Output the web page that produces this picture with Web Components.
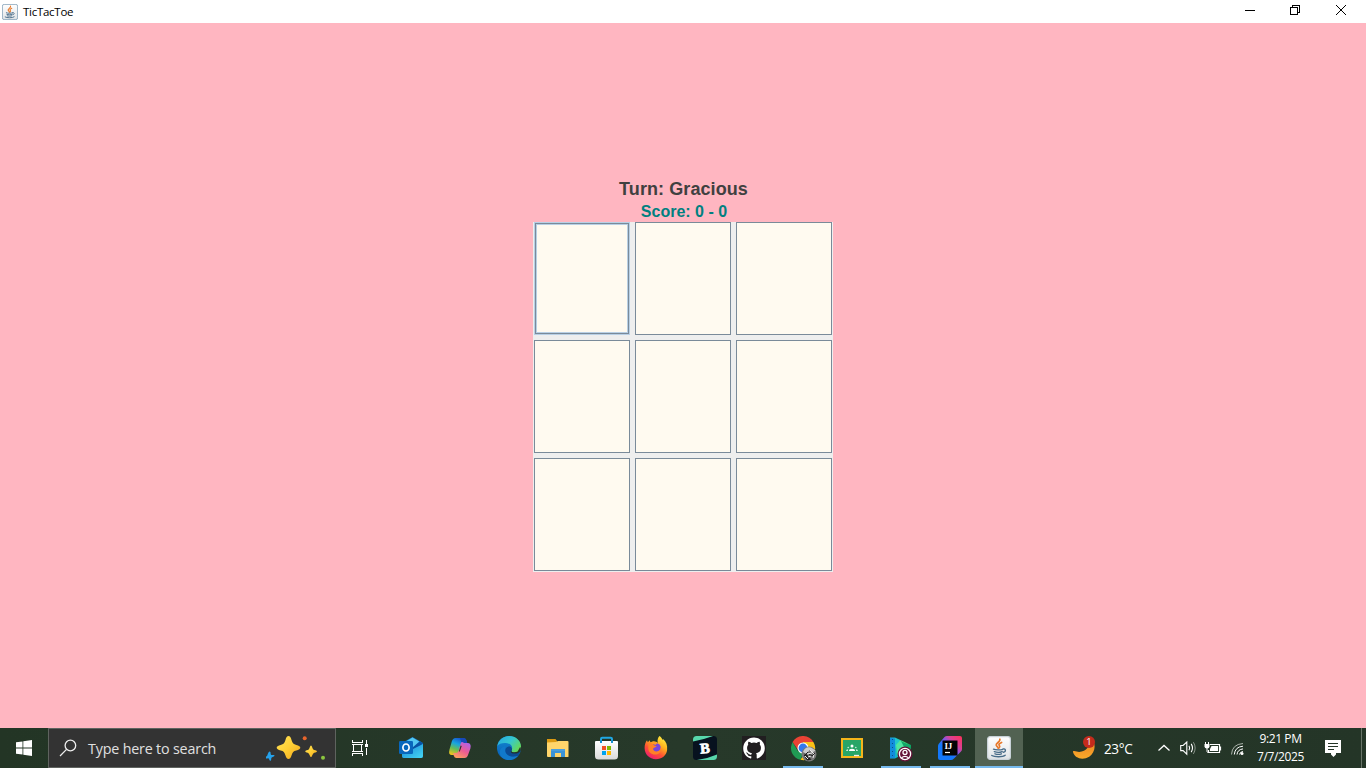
<!DOCTYPE html>
<html lang="en"><head><meta charset="utf-8"><title>TicTacToe</title>
<style>html,body{margin:0;height:100%;overflow:hidden}body{font-family:"Open Sans","Noto Sans",sans-serif}</style></head>
<body><desk-top></desk-top>
<script>
const define=(name,html)=>{
  const t=document.createElement('template');t.innerHTML=html;
  customElements.define(name,class extends HTMLElement{
    constructor(){super();this.attachShadow({mode:'open'}).append(t.content.cloneNode(true));}
  });
};

define('java-cup',`<style>:host{display:block;width:24px;height:24px}svg{display:block;width:100%;height:100%}</style>
<svg viewBox="0 0 24 24"><defs><linearGradient id="g" x2="0" y2="1"><stop stop-color="#fff"/><stop offset="1" stop-color="#dfe3e6"/></linearGradient></defs>
<rect x=".6" y=".6" width="22.8" height="22.8" rx="2.6" fill="url(#g)" stroke="var(--edge,#c9d2d8)" stroke-width="1.2"/>
<g fill="none" stroke="#e8792a" stroke-width="1.7" stroke-linecap="round"><path d="M12.8 3.2c1 2.4-3.8 3.8-3.6 5.8.1 1.4 2 1.9 2 3.2"/><path d="M14.6 6.4c-2.600 1.200-3.200 2-2.200 3.200.7.9.3 1.700-.4 2.400"/></g>
<g fill="none" stroke="#486c88" stroke-width="1.400" stroke-linecap="round"><path d="M6.500 13.200c2 .9 7 .9 9.300.1M7.300 15.600c2.200.8 6 .8 7.800 0M8 17.800c1.800.6 4.800.6 6.400 0M16 13c3-.9 3.300 2.700.3 3.200M4.800 19.500c2.500 1.600 11 1.700 13.400-.2"/></g></svg>`);

define('title-bar',`<style>
:host{display:flex;height:23px;background:#fff;color:#000;align-items:center}
java-cup{width:16px;height:16px;margin-left:2px;--edge:#7d9db5}
span{font-size:11.500px;letter-spacing:-.27px;margin-left:5px;flex:1;line-height:23px}
svg{display:block}
</style><java-cup></java-cup><span><slot></slot></span>
<svg width="138" height="23" fill="none" stroke="#000" shape-rendering="crispEdges"><path d="M17 10.500h10"/><path d="M62.500 7.500h7v7h-7zM64.500 7V5.500h7v7H70"/><path d="M108 5l10 10M118 5l-10 10" shape-rendering="auto" stroke-width="1"/></svg>`);

define('game-cell',`<style>:host{display:block;box-sizing:border-box;background:#fffaf0;border:1px solid #7a8a99}
:host([focused]){border-color:#b8cfe5;box-shadow:inset 0 0 0 1px #7a8a99,inset 0 0 0 2px #b8cfe5}</style><slot></slot>`);

define('game-board',`<style>
:host{display:grid;box-sizing:border-box;width:300px;height:350px;background:#eee;padding:0 1px 1px;grid-template-columns:repeat(3,96px);grid-template-rows:repeat(3,113px);gap:5px}
</style><game-cell focused></game-cell>${'<game-cell></game-cell>'.repeat(8)}`);

define('game-panel',`<style>
:host{display:flex;flex-direction:column;align-items:center;background:#ffb6c1;font-family:"Liberation Sans",sans-serif;font-weight:bold;padding-top:155px;box-sizing:border-box}
.t{font-size:18px;line-height:22px;color:#404040;letter-spacing:.08px;padding-left:1px}
.s{font-size:16px;line-height:20px;color:#008080;padding:2px 0 0 2px}
</style><div class="t">Turn: Gracious</div><div class="s">Score: 0 - 0</div><game-board></game-board>`);

define('search-box',`<style>
:host{display:flex;box-sizing:border-box;width:288px;height:40px;background:#333;border:1px solid #5f635f;align-items:center;color:#e0e0e0;font-size:14.300px;letter-spacing:-.18px}
span{flex:1;white-space:nowrap;line-height:38px;padding-top:2px}svg{display:block;flex:none}
</style><svg width="39" height="38" fill="none" stroke="#eee" stroke-width="1.300"><circle cx="21.400" cy="16.500" r="5.300"/><path d="M17.500 20.400L11 27"/></svg><span><slot></slot></span>
<svg width="69" height="38"><defs><linearGradient id="s" x2="1" y2="1"><stop stop-color="#ffe35a"/><stop offset=".5" stop-color="#ffcf35"/><stop offset="1" stop-color="#eea41b"/></linearGradient></defs>
<path fill="url(#s)" d="M22.500 7c1.500 0 2.300 1.200 3.100 4.200.8 2.900 1.900 4 4.700 4.800 2.600.7 4 1.500 4 2.700s-1.400 2.200-4 2.800c-2.900.7-3.900 1.800-4.700 4.800-.8 2.500-1.600 3.700-3.100 3.700s-2.300-1.200-3.100-3.700c-.8-3-1.800-4.100-4.700-4.800-2.600-.6-4-1.600-4-2.800s1.400-2 4-2.700c2.800-.8 3.900-1.900 4.700-4.800.8-3 1.600-4.200 3.100-4.200z"/>
<path fill="url(#s)" d="M45 16.500c1 0 1.400 3.100 2.300 3.900s3.700.8 3.700 1.900-2.800 1.300-3.700 2.100S46 28 45 28s-1.400-2.800-2.300-3.600-3.500-1-3.500-2.100 2.600-1.100 3.500-1.900 1.300-3.900 2.300-3.900z"/>
<path fill="#25a2ec" d="M3.300 22.600c1.300.3.500 2.500 1.200 3.200s3.500-.4 3.500.8-2.500 1.400-3 2.200 0 3.200-1.100 3-1.300-2.200-2-2.600-3.200 1-3.400 0 2-1.900 2.300-2.700 1.100-4.100 2.500-3.900z" transform="translate(.5)"/>
<circle cx="38.700" cy="9.200" r="2" fill="#e9652c"/><circle cx="57" cy="28.700" r="2" fill="#8cc63f"/></svg>`);

define('task-button',`<style>
:host{display:flex;box-sizing:border-box;width:48px;height:40px;align-items:center;justify-content:center;position:relative}
:host([active]){background:#526252}
i{display:none;position:absolute;left:4px;right:4px;bottom:0;height:2px;background:#76b9ed}
:host([open]) i{display:block}:host([active]) i{left:0;right:0}
</style><slot></slot><i></i>`);

define('tray-area',`<style>
:host{display:flex;height:40px;color:#fff;align-items:center;font-size:13.600px}
svg{display:block;flex:none}.temp{width:47px;letter-spacing:-.4px}.clock{width:49px;margin-right:6px;display:flex;flex-direction:column;align-items:center;font-size:12px;line-height:18px;letter-spacing:-.4px;white-space:nowrap;padding-bottom:1px}
.weather{position:relative;width:32px;height:40px}.weather b{position:absolute;left:11px;top:8px;width:12px;height:12px;border-radius:50%;background:#c42b1c;color:#fff;font:9.500px/12px "Open Sans",sans-serif;text-align:center}
.end{width:5px;height:40px;box-sizing:border-box;border-left:1px solid #687468;margin-left:17px}
</style>
<div class="weather"><svg width="32" height="40"><defs><linearGradient id="m" x2="0" y2="1"><stop stop-color="#e87b22"/><stop offset="1" stop-color="#f9aa2a"/></linearGradient></defs><path d="M17.600 9.600c7 3.600 6.600 14.800-.4 19.100C11 32.500 2.700 30.700 1 24.100c-.2-.9.400-1.300 1.200-1 10.200 3.100 17-3.400 15.400-13.500z" fill="url(#m)"/></svg><b>1</b></div>
<div class="temp">23°C</div>
<svg width="105" height="40" fill="none" stroke="#fff">
<path d="M7.500 22.500l5.500-5 5.500 5" stroke-width="1.300"/>
<path d="M29.700 17.500h2.400l3.700-3.400v12l-3.700-3.500h-2.400z" stroke-width="1.100"/><path d="M38 17.800q1.300 2.200 0 4.500M40.200 15.900q2.600 4.100 0 8.200" stroke-width="1.100"/><path d="M42.400 14.200q3.500 5.800 0 11.700" stroke="#8a948a"/>
<path d="M59 16.500h9.500v8H57.500v-2.500M69.500 18.500v4" stroke-width="1.200"/><path d="M60.500 18h6.500v5h-8v-2z" fill="#fff" stroke="none"/><path d="M54.500 14v2.500M57.500 14v2.500M56 20v3.500q0 1 1.500 1"/><path d="M53.500 16h5v2.200q0 2.300-2.500 2.300t-2.500-2.300z" fill="#fff" stroke="none"/>
<path d="M80.500 26.500Q81 16.300 92 15.500" stroke="#aab2aa"/><path d="M83.300 26.500Q84 18.800 92 18.200M86 26.500Q86.500 21.500 92 20.900M88.500 26.500q.5-2.700 3.500-3"/><circle cx="91" cy="25.500" r="1.500" fill="#fff" stroke="none"/></svg>
<div class="clock"><span>9:21 PM</span><span>7/7/2025</span></div>
<svg width="33" height="40"><path d="M14 12h16v13h-5v1.500L22.500 29 20 26.500V25h-6z" fill="#fff"/><path d="M17 15.500h10M17 18.500h10M17 21.500h6" stroke="#253528"/></svg><div class="end"></div>`);

define('task-bar',`<style>
:host{display:flex;height:40px;background:linear-gradient(90deg,#233525,#27392a 50%,#243527)}
svg{display:block;flex:none}.apps{display:flex;gap:1px;margin-left:3px;flex:1}
</style>
<task-button><svg width="16" height="16" fill="#fff"><path d="M0 2.300L6.500 1.400v6.200H0zM7.300 1.300L16 0v7.600H7.300zM0 8.400h6.500v6.200L0 13.700zM7.300 8.400H16V16l-8.700-1.300z"/></svg></task-button>
<search-box>Type here to search</search-box>
<task-button><svg width="16" height="16" fill="none" stroke="#fff" shape-rendering="crispEdges"><path d="M.5 0v2.500h10V0M1.500 4.500h8v7h-8zM0 4.500h11M0 11.500h11M.5 16v-2.500h10V16M14.500 0v4M14.500 8v7"/><path d="M13 4h3v3h-3z" fill="#fff" stroke="none"/></svg></task-button>
<div class="apps">
<task-button><svg width="24" height="24"><defs><linearGradient id="oa" x2="1" y2="1"><stop stop-color="#1683d8"/><stop offset="1" stop-color="#46d8f4"/></linearGradient></defs><path d="M3 7L13.500 1 24 7v13q0 2-2 2H5q-2 0-2-2z" fill="#1472c4"/><path d="M6 6l7.500-4.500L21 6l-8 7z" fill="#54c8f2"/><path d="M13 12L21 5l3 2.500-10 9z" fill="#0753a5"/><path d="M3 17l9-3 12-6v12q0 2-2 2H5q-2 0-2-2z" fill="url(#oa)"/><rect y="5" width="14" height="13" rx="1.300" fill="#0867bd"/><ellipse cx="7" cy="11.500" rx="3.100" ry="3.500" fill="none" stroke="#fff" stroke-width="1.700"/></svg></task-button>
<task-button><svg width="24" height="24"><defs><linearGradient id="ca" x1=".6" x2=".2" y2="1"><stop stop-color="#1653d0"/><stop offset=".35" stop-color="#18a5df"/><stop offset=".65" stop-color="#67bd56"/><stop offset="1" stop-color="#f3c61c"/></linearGradient><linearGradient id="cb" x1=".8" x2=".2" y2="1"><stop stop-color="#ad63ec"/><stop offset=".5" stop-color="#ef5b93"/><stop offset="1" stop-color="#ffa35b"/></linearGradient></defs><path d="M7.500 2h8q2 0 2.800 2.500L19 7h-3q-2 0-2.700 2.500l-2 7Q10.500 19 8 19H4q-4 0-2.500-5.500l2.300-8Q4.800 2 7.500 2z" fill="url(#ca)"/><path d="M16 2q2 0 2.600 2.500L19.300 7h-3q-1.500 0-2.300 1.500L12 2z" fill="#1749b9"/><path d="M16.500 22h-8q-2 0-2.800-2.500L5 17h3q2 0 2.700-2.500l2-7Q13.500 5 16 7h3.500q4.200 0 2.900 5.500l-2.200 6Q19.200 22 16.500 22z" fill="url(#cb)"/><path d="M12.600 9.500l-1.700 6h.9l1.900-5.500z" fill="#253528"/></svg></task-button>
<task-button><svg width="24" height="24"><defs><linearGradient id="ea" y2=".6"><stop stop-color="#26a6e4"/><stop offset=".55" stop-color="#35c7cf"/><stop offset="1" stop-color="#64d85a"/></linearGradient><linearGradient id="eb" x2="0" y2="1"><stop stop-color="#148cd4"/><stop offset="1" stop-color="#0758b2"/></linearGradient></defs><circle cx="12" cy="12" r="12" fill="url(#eb)"/><path d="M.3 10C1.500 3.500 7 0 12 0c7 0 12 5 12 10.500 0 4-3 6-6.500 6-2.200 0-3.600-.8-3.100-1.800 1.700-2.500.6-6.700-4.100-7.500C6 6.400 2 7.500.3 10z" fill="url(#ea)"/><path d="M8.800 10.200c-3 6 2.200 12.300 12.400 9.500C18 23.300 15 24 12 24 6.500 24 1 19.500 3.200 14 4.200 11.500 6.500 10.300 8.800 10.200z" fill="#1179ca"/><path d="M14.700 14.500c-1 1.200.8 2.600 3.500 2.500 2 0 4.400-1.100 5.200-1.900-.5 2-1.400 3.500-2.500 4.700-6 2.200-12.500-.2-12.600-5.300 0-2.500 1.500-3.800 3.500-4.100 2.600.1 3.700 2.200 2.900 4.100z" fill="#0b4b94"/><path d="M11.600 10.600c2.800.1 4 2.700 2.400 4.400-.7 1.400.8 2.400 3.100 2.600 2.500.2 5-1 6.500-2.700.8-3-.5-3.900-.5-3.900l-2.500 4.500q-1.500.8-3.100.8c-2.200 0-3.600-.6-3.100-1.600.9-1.500.4-3.500-2.800-4.100z" fill="#253528"/></svg></task-button>
<task-button><svg width="24" height="24"><path d="M1 3h8.500l1.500 2v2H1z" fill="#dc9a12"/><path d="M1 6.500l9-.5 2-1h9.500q1 0 1 1v14.500q0 .5-1 .5H2q-1 0-1-1z" fill="#ffd56b"/><path d="M5 21v-7q0-1 1-1h12q1 0 1 1v7h-4v-4H9v4z" fill="#3b94d8"/><path d="M6 13h12q1 0 1 1v1H5v-1q0-1 1-1z" fill="#4a9fde"/></svg></task-button>
<task-button><svg width="24" height="24"><defs><linearGradient id="ma" x2="0" y2="1"><stop stop-color="#fff"/><stop offset="1" stop-color="#dadada"/></linearGradient></defs><path d="M6 7V3q0-1.300 1.300-1.300h8.400q1.300 0 1.300 1.300v4" fill="none" stroke="#20a8e4" stroke-width="2"/><path d="M1 5h21q1 0 1 1v14q0 3.500-3.500 3.500h-16Q0 23.500 0 20V6q0-1 1-1z" fill="url(#ma)"/><path d="M6 4v3M17 4v3" stroke="#1692d4" stroke-width="2"/><path fill="#f25022" d="M7 10h4v4H7z"/><path fill="#7fba00" d="M12 10h4v4h-4z"/><path fill="#00a4ef" d="M7 15h4v4H7z"/><path fill="#ffb900" d="M12 15h4v4h-4z"/></svg></task-button>
<task-button><svg width="24" height="24"><defs><linearGradient id="fa" x1=".8" x2=".2" y2="1"><stop stop-color="#fff044"/><stop offset=".35" stop-color="#ffb21c"/><stop offset=".65" stop-color="#ff5034"/><stop offset="1" stop-color="#eb1579"/></linearGradient></defs><path d="M15.500 0c1.500 1 2.300 2.600 3.500 4 .1-.8.1-1 .1-1 3.200 2.600 4.500 6.200 4 11-.6 5.500-5.200 9.200-11.200 9.200C5.500 23.200.8 18.500.6 12.300.5 8.700 1.500 6 3 4.200l.8 2 2-2 .6 2 3-.9c2.300.2 3.400.8 4.400 1.600C13 4 14 1.500 15.500 0z" fill="url(#fa)"/><ellipse cx="12" cy="11.800" rx="4.800" ry="4.600" fill="#7846dc"/><path d="M4.300 7.500c2.200-.6 4.400-.2 6.400 2.300l2 .3c-.5 1.300-2.300 1.400-3.300 2.200-1 1 .6 3.800 4 2.900 2.200-.5 3.300-1.900 3.100-4.200 1.700 2.800.1 6-3.100 7.200-5 1.300-9-1.400-9.100-5.700z" fill="#ff8127"/><path d="M6.200 6.200L9 5.700c1.500 0 3.400.5 4.400 1.300L11.300 9z" fill="#ff9b22"/></svg></task-button>
<task-button><svg width="24" height="24"><rect width="24" height="24" rx="3.500" fill="#07121f"/><path d="M0 5.500V3.500Q0 0 3.500 0H20Q11 3.500 0 5.500zM4 24q11-1.500 20-5.500v2Q24 24 20.500 24z" fill="#58d8ac"/><text x="7" y="17" font-family="Liberation Serif" font-weight="bold" font-size="14.500" fill="#fff" stroke="#fff" stroke-width=".8" transform="rotate(-5 12 12)">B</text></svg></task-button>
<task-button><svg width="24" height="24"><path fill="#211e20" d="M0 0h24v24H0z"/><path transform="translate(1.200 1.200) scale(.9)" fill="#fff" d="M12 .3c-6.600 0-12 5.400-12 12 0 5.300 3.400 9.800 8.200 11.400.6.1.8-.3.8-.6v-2c-3.300.7-4-1.600-4-1.600-.6-1.400-1.400-1.800-1.400-1.800-1-.7.1-.7.1-.7 1.200 0 1.900 1.200 1.900 1.200 1 1.800 2.800 1.300 3.500 1 0-.8.4-1.300.7-1.600-2.700-.3-5.500-1.300-5.500-5.900 0-1.300.5-2.400 1.300-3.200-.1-.4-.5-1.600.1-3.300 0 0 1-.3 3.300 1.200a11.500 11.500 0 016 0C17.300 4.900 18.300 5.200 18.300 5.200c.6 1.700.2 2.900.1 3.300.8.8 1.300 1.900 1.300 3.200 0 4.600-2.800 5.600-5.500 5.900.5.4.8 1.200.8 2.300v3.200c0 .3.2.7.8.6C20.600 22.100 24 17.600 24 12.300c0-6.600-5.400-12-12-12z"/></svg></task-button>
<task-button open><svg width="26" height="26" style="margin:2px 0 0 2px"><path d="M1.600 6L6.800 15 12 17.500 9.500 23.800A12 12 0 011.600 6z" fill="#209b54"/><path d="M22.400 6A12 12 0 019.500 23.800L14 16.500 12 6z" fill="#fbc116"/><path d="M1.600 6A12 12 0 0122.400 6H12L7 14z" fill="#ea4335"/><circle cx="12" cy="12" r="5.500" fill="#fff"/><circle cx="12" cy="12" r="4.400" fill="#3478ec"/><circle cx="18" cy="18" r="7.500" fill="#777"/><path d="M12 16q2-6 8-4.500l4.500 3-3 2-3-2.500-3 4z" fill="#ccc"/><path d="M13.500 17.500q3 .5 4 3l3 3-4 1q-3-2-3-7z" fill="#222"/><path d="M19 14l4 4-1 4M16 18l5-1M17 21l3-1M14 20l3 3" stroke="#eee" fill="none"/><path d="M13 20l4-4M21 20l3-3M18 18.500l3 1" stroke="#222"/></svg></task-button>
<task-button><svg width="24" height="24"><rect x="2" y="3" width="20" height="18" fill="#27a567" stroke="#f4b51b" stroke-width="2"/><g fill="#c9eadb"><circle cx="12" cy="10" r="1.500" fill="#fff"/><circle cx="8.200" cy="11.500" r=".8"/><circle cx="15.800" cy="11.500" r=".8"/><path d="M9 15q0-2.300 3-2.300t3 2.300z" fill="#fff"/><path d="M6 15q0-1.700 2-1.700v1.700zM18 15q0-1.700-2-1.700v1.700z"/></g><path d="M14 19.500h5" stroke="#eee" stroke-width="1.300"/></svg></task-button>
<task-button open><svg width="24" height="26" style="margin-top:2px"><defs><linearGradient id="pa" x2="1"><stop stop-color="#16a3ed"/><stop offset=".35" stop-color="#14b9ba"/><stop offset=".65" stop-color="#49e77c"/><stop offset="1" stop-color="#07985b"/></linearGradient></defs><path d="M1 1.500h5L22 9v5L6 22.500H1z" fill="url(#pa)"/><path d="M1 2l5 1v19H1z" fill="#128cdc"/><path d="M6 2l5 2.500L6 13z" fill="#21c8cc"/><path d="M7 9l4-4.500L17 9 8 19z" fill="#4fe6a0"/><path d="M12 5l10 5-6 3z" fill="#13a869"/><path d="M3.500 3v19" stroke="#07528c" stroke-dasharray="1 3"/><circle cx="16" cy="18" r="7.500" fill="#641338"/><g fill="none" stroke="#fff" stroke-width="1.300"><circle cx="16" cy="18" r="5.600"/><circle cx="16" cy="16.400" r="2"/><path d="M12.500 21.800q3.500-3 7 0"/></g></svg></task-button>
<task-button open><svg width="24" height="24"><defs><linearGradient id="ia" x1="1" x2="0" y2="1"><stop stop-color="#ff3159"/><stop offset=".28" stop-color="#db4193"/><stop offset=".45" stop-color="#7a58ed"/><stop offset=".62" stop-color="#1478fb"/></linearGradient></defs><path d="M9 0h13q2 0 2 2v11q0 1.500-1 2.500l-7 7q-1.500 1.500-3 1.500H2q-2 0-2-2V10q0-1.500 1-2.500L6.500 1Q7.500 0 9 0z" fill="url(#ia)"/><path d="M4.500 4.500h15v15h-15z" fill="#050506"/><text x="6.500" y="12.800" font-family="Liberation Serif" font-weight="bold" font-size="9" letter-spacing="-.3" fill="#fff">IJ</text><path d="M7 16.500h5" stroke="#fff" stroke-width="1.200"/></svg></task-button>
<task-button open active><java-cup></java-cup></task-button>
</div><tray-area></tray-area>`);

define('desk-top',`<style>:host{display:flex;flex-direction:column;width:1366px;height:768px}game-panel{flex:1}</style>
<title-bar>TicTacToe</title-bar><game-panel></game-panel><task-bar></task-bar>`);
</script></body></html>
